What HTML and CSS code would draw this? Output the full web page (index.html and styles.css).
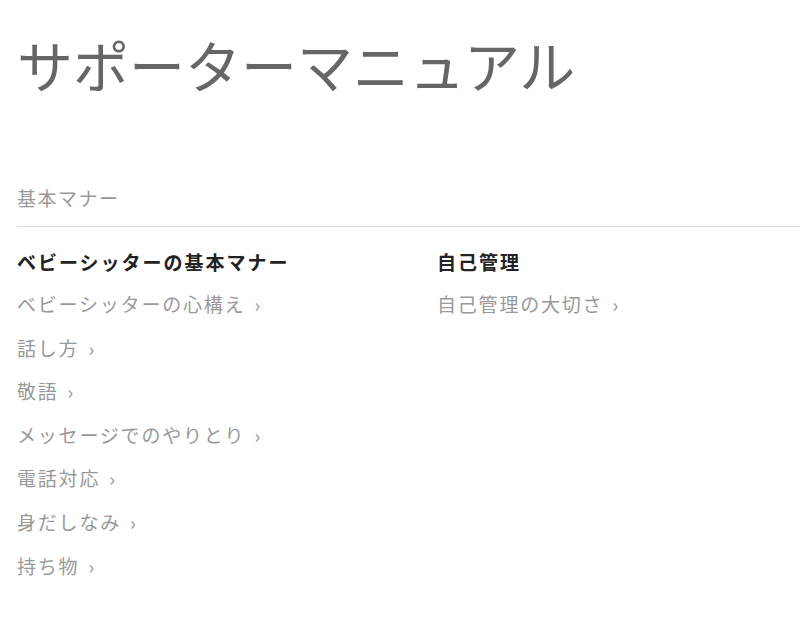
FILE: index.html
```html
<!DOCTYPE html>
<html lang="ja">
<head>
  <meta charset="UTF-8">
  <meta name="viewport" content="width=device-width, initial-scale=1.0">
  <title>サポーターマニュアル</title>
  <link rel="stylesheet" href="styles.css">
</head>
<body>
  <div class="page">
    <h1 class="title">サポーターマニュアル</h1>

    <!-- 基本マナー -->
    <section class="manual">
      <p class="category">基本マナー</p>
      <div class="columns">
        <div class="column">
          <h2>ベビーシッターの基本マナー</h2>
          <ul class="links">
            <li><a href="#">ベビーシッターの心構え</a></li>
            <li><a href="#">話し方</a></li>
            <li><a href="#">敬語</a></li>
            <li><a href="#">メッセージでのやりとり</a></li>
            <li><a href="#">電話対応</a></li>
            <li><a href="#">身だしなみ</a></li>
            <li><a href="#">持ち物</a></li>
          </ul>
        </div>
        <div class="column">
          <h2>自己管理</h2>
          <ul class="links">
            <li><a href="#">自己管理の大切さ</a></li>
          </ul>
        </div>
      </div>
    </section>
  </div>
</body>
</html>
```

FILE: styles.css
```css
/* General styles */
body {
  margin: 0;
  font-family: "Noto Sans CJK JP", "Noto Sans", sans-serif;
  background-color: #fff;
  color: #333;
}

.page {
  padding: 24px 0 40px 17px;
}

.title {
  margin: 0;
  font-size: 56px;
  font-weight: 400;
  color: #666;
  line-height: 80px;
}

/* Manual section */
.manual {
  margin-top: 81px;
}

.category {
  margin: 0;
  padding-bottom: 15px;
  font-size: 19px;
  letter-spacing: 1.5px;
  color: #999;
  border-bottom: 1px solid #ddd;
  line-height: 26px;
}

.columns {
  display: flex;
  padding-top: 15px;
}

.column {
  flex: 0 0 420px;
}

.column:last-child {
  flex: 1 1 auto;
}

.column h2 {
  margin: 0;
  font-size: 19px;
  font-weight: 700;
  letter-spacing: 2px;
  color: #222;
  line-height: 40px;
}

.links {
  list-style: none;
  margin: 0;
  padding: 0;
}

.links li {
  height: 43.6px;
  line-height: 43.6px;
}

.links a {
  font-size: 19px;
  letter-spacing: 1.8px;
  color: #999;
  text-decoration: none;
}

.links a::after {
  content: "›";
  margin-left: 9px;
  color: #999;
}
```
